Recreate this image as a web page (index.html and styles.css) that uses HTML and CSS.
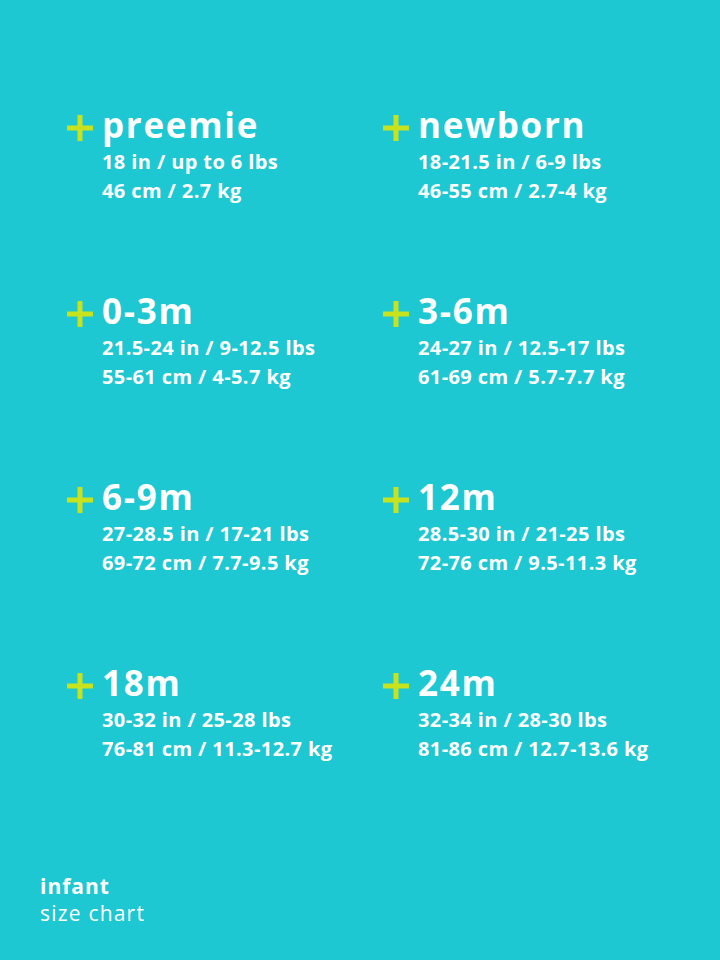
FILE: index.html
```html
<!DOCTYPE html>
<html>
<head>
<meta charset="utf-8">
<link rel="stylesheet" href="styles.css">
</head>
<body>
<main class="page">
  <section class="grid">
    <div class="item">
      <svg class="plus" viewBox="0 0 26 26"><path d="M13 0V26M0 13H26"/></svg>
      <div class="info">
        <h2 class="title">preemie</h2>
        <p class="line">18 in / up to 6 lbs</p>
        <p class="line">46 cm / 2.7 kg</p>
      </div>
    </div>
    <div class="item">
      <svg class="plus" viewBox="0 0 26 26"><path d="M13 0V26M0 13H26"/></svg>
      <div class="info">
        <h2 class="title">newborn</h2>
        <p class="line">18-21.5 in / 6-9 lbs</p>
        <p class="line">46-55 cm / 2.7-4 kg</p>
      </div>
    </div>
    <div class="item">
      <svg class="plus" viewBox="0 0 26 26"><path d="M13 0V26M0 13H26"/></svg>
      <div class="info">
        <h2 class="title">0-3m</h2>
        <p class="line">21.5-24 in / 9-12.5 lbs</p>
        <p class="line">55-61 cm / 4-5.7 kg</p>
      </div>
    </div>
    <div class="item">
      <svg class="plus" viewBox="0 0 26 26"><path d="M13 0V26M0 13H26"/></svg>
      <div class="info">
        <h2 class="title">3-6m</h2>
        <p class="line">24-27 in / 12.5-17 lbs</p>
        <p class="line">61-69 cm / 5.7-7.7 kg</p>
      </div>
    </div>
    <div class="item">
      <svg class="plus" viewBox="0 0 26 26"><path d="M13 0V26M0 13H26"/></svg>
      <div class="info">
        <h2 class="title">6-9m</h2>
        <p class="line">27-28.5 in / 17-21 lbs</p>
        <p class="line">69-72 cm / 7.7-9.5 kg</p>
      </div>
    </div>
    <div class="item">
      <svg class="plus" viewBox="0 0 26 26"><path d="M13 0V26M0 13H26"/></svg>
      <div class="info">
        <h2 class="title">12m</h2>
        <p class="line">28.5-30 in / 21-25 lbs</p>
        <p class="line">72-76 cm / 9.5-11.3 kg</p>
      </div>
    </div>
    <div class="item">
      <svg class="plus" viewBox="0 0 26 26"><path d="M13 0V26M0 13H26"/></svg>
      <div class="info">
        <h2 class="title">18m</h2>
        <p class="line">30-32 in / 25-28 lbs</p>
        <p class="line">76-81 cm / 11.3-12.7 kg</p>
      </div>
    </div>
    <div class="item">
      <svg class="plus" viewBox="0 0 26 26"><path d="M13 0V26M0 13H26"/></svg>
      <div class="info">
        <h2 class="title">24m</h2>
        <p class="line">32-34 in / 28-30 lbs</p>
        <p class="line">81-86 cm / 12.7-13.6 kg</p>
      </div>
    </div>
  </section>
  <footer class="caption">
    <div class="cap-bold">infant</div>
    <div class="cap-light">size chart</div>
  </footer>
</main>
</body>
</html>
```
FILE: styles.css
```css
html, body {
  margin: 0;
  padding: 0;
}
body {
  background: #1dc8d3;
  color: #ffffff;
  font-family: "Open Sans", Lato, sans-serif;
  width: 720px;
  height: 960px;
  overflow: hidden;
}
.page {
  position: relative;
  height: 960px;
}
.grid {
  display: grid;
  grid-template-columns: 316px 316px;
  grid-auto-rows: 186px;
  padding: 102px 0 0 67px;
}
.item {
  display: flex;
  align-items: flex-start;
  gap: 9px;
}
.plus {
  width: 26px;
  height: 26px;
  flex: none;
  margin-top: 13px;
}
.plus path {
  stroke: #c8e21e;
  stroke-width: 5;
  fill: none;
}
.title {
  margin: 0;
  font-size: 35px;
  font-weight: 700;
  line-height: 45px;
  letter-spacing: 1.7px;
}
.line {
  margin: 0;
  font-size: 20px;
  font-weight: 700;
  line-height: 29px;
  letter-spacing: 0.4px;
}
.caption {
  position: absolute;
  left: 40px;
  top: 872px;
}
.cap-bold {
  font-size: 21px;
  font-weight: 700;
  line-height: 28px;
  letter-spacing: 1px;
}
.cap-light {
  font-size: 21px;
  font-weight: 400;
  line-height: 26px;
  letter-spacing: 1.2px;
}
```
